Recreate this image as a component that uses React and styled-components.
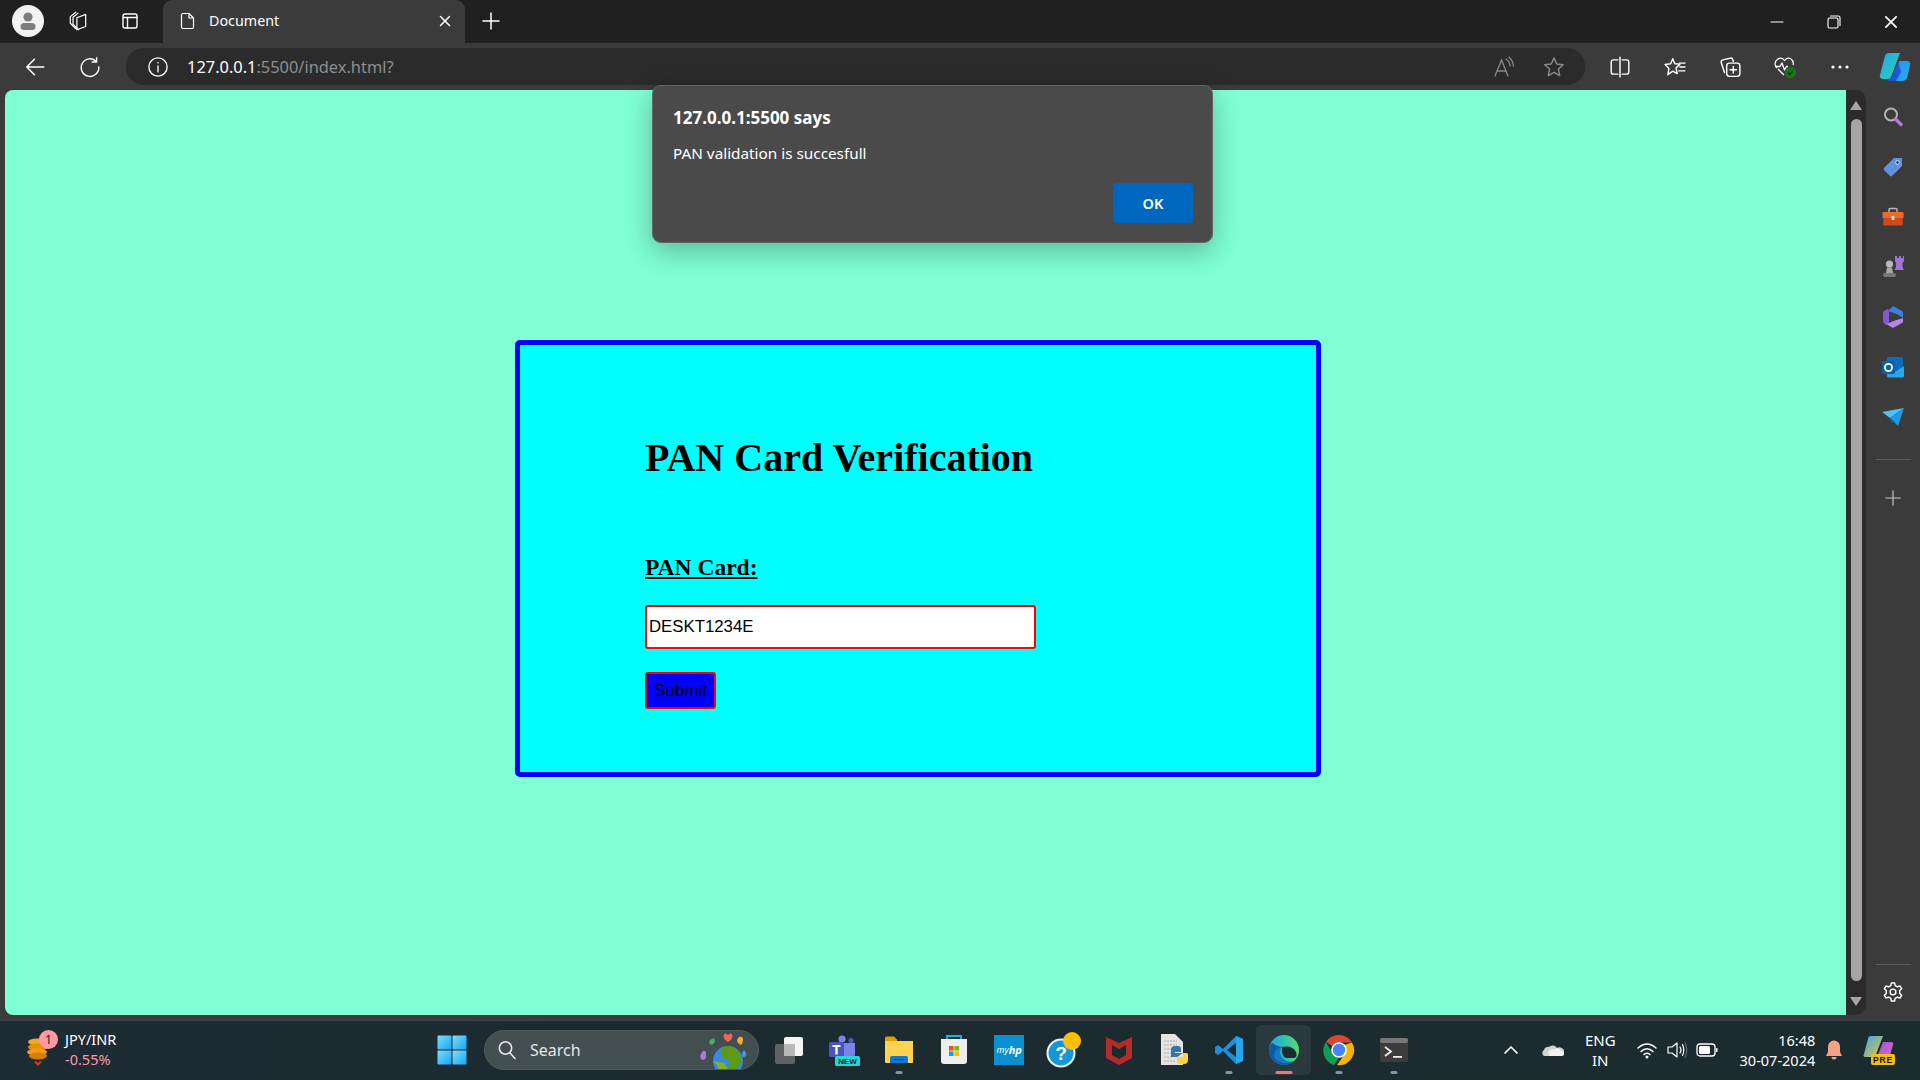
import React from "react"
import styled, { createGlobalStyle } from "styled-components"

const GlobalStyle = createGlobalStyle`
  html, body {
    margin: 0;
    height: 100%;
    overflow: hidden;
    background: #3b3b3b;
  }
  * {
    box-sizing: border-box;
  }
`

const Screen = styled.div`
  position: relative;
  width: 1920px;
  height: 1080px;
  display: flex;
  flex-direction: column;
  font-family: "Noto Sans", "Open Sans", sans-serif;
  color: #fff;
`

/* browser title bar */
const TitleBar = styled.div`
  height: 43px;
  flex: none;
  display: flex;
  align-items: center;
  background: #202020;
`

const TitleButton = styled.div`
  width: ${p => p.$w || 53}px;
  height: 41px;
  align-self: flex-start;
  flex: none;
  display: flex;
  align-items: center;
  justify-content: center;
`

const Avatar = styled.div`
  width: 32px;
  height: 32px;
  margin-left: 2px;
  border-radius: 50%;
  background: #f2f2f2;
  display: flex;
  align-items: center;
  justify-content: center;
`

const Tab = styled.div`
  width: 302px;
  height: 43px;
  margin-left: 7px;
  padding: 0 13px 2px 15px;
  flex: none;
  display: flex;
  align-items: center;
  gap: 11px;
  background: #3b3b3b;
  border-radius: 9px 9px 0 0;
  font-size: 14.3px;
`

const TabTitle = styled.span`
  flex: 1;
  margin-top: -1px;
`

const WindowControls = styled.div`
  margin-left: auto;
  display: flex;
  padding-right: 1px;
`

const WindowButton = styled.div`
  width: 57px;
  height: 41px;
  display: flex;
  align-items: center;
  justify-content: center;
`

/* address row */
const Toolbar = styled.div`
  height: 47px;
  flex: none;
  display: flex;
  align-items: center;
  background: #3b3b3b;
  padding-left: 7px;
`

const ToolButton = styled.div`
  width: ${p => p.$w || 55}px;
  height: 37px;
  flex: none;
  display: flex;
  align-items: center;
  justify-content: center;
`

const AddressBar = styled.div`
  width: 1459px;
  height: 37px;
  margin: 0 7px 0 9px;
  padding: 0 6px 0 21px;
  flex: none;
  display: flex;
  align-items: center;
  background: #2b2b2b;
  border-radius: 18px;
`

const Url = styled.div`
  margin-left: 18px;
  flex: 1;
  font-size: 16.4px;
  color: #8f8f8f;
  b {
    font-weight: 400;
    color: #fff;
  }
`

/* middle of the window */
const Body = styled.div`
  flex: 1;
  min-height: 0;
  display: flex;
  background: #3b3b3b;
  padding: 0 0 5px 5px;
`

const Page = styled.main`
  width: 1841px;
  flex: none;
  background: #7fffd4;
  border-radius: 8px 0 0 8px;
  padding: 250px 0 0 510px;
`

const Card = styled.section`
  width: 806px;
  height: 437px;
  padding: 90px 0 0 125px;
  background: #00ffff;
  border: 5px solid #0000ff;
  border-radius: 5px;
  color: #000;
  font-family: "Liberation Serif", "Times New Roman", serif;
`

const Heading = styled.h1`
  margin: 0 0 73px;
  font-size: 40px;
  line-height: 46px;
  font-weight: 700;
`

const FieldLabel = styled.label`
  display: block;
  font-size: 23.5px;
  line-height: 27px;
  font-weight: 700;
  text-decoration: underline;
  margin-bottom: 24px;
`

const TextInput = styled.input`
  display: block;
  width: 391px;
  height: 44px;
  padding: 0 2px;
  background: #fff;
  border: 2px solid #ff0000;
  border-radius: 3px;
  outline: none;
  font-family: "Liberation Sans", Arial, sans-serif;
  font-size: 16.8px;
  color: #000;
  margin-bottom: 23px;
`

const SubmitButton = styled.button`
  display: block;
  width: 71px;
  height: 37px;
  padding: 0;
  background: #0000ff;
  border: 2px solid #ff0000;
  border-radius: 3px;
  font-family: "Liberation Sans", Arial, sans-serif;
  font-size: 17px;
  color: #000;
`

const Scrollbar = styled.div`
  width: 20px;
  flex: none;
  display: flex;
  flex-direction: column;
  align-items: center;
  background: #2b2b2b;
  border-radius: 0 10px 10px 0;
  padding: 11px 0 9px;
`

const Arrow = styled.div`
  width: 0;
  height: 0;
  flex: none;
  border-left: 6px solid transparent;
  border-right: 6px solid transparent;
  ${p => p.$down ? "border-top: 9px solid #a5a5a5;" : "border-bottom: 9px solid #a5a5a5;"}
`

const Thumb = styled.div`
  width: 11px;
  flex: 1;
  margin: 9px 0 16px;
  background: #a5a5a5;
  border-radius: 6px;
`

const Sidebar = styled.aside`
  flex: 1;
  display: flex;
  flex-direction: column;
  align-items: center;
  padding: 2px 0 3px;
  margin-bottom: -5px;
`

const SideItem = styled.div`
  width: 100%;
  height: 50px;
  flex: none;
  display: flex;
  align-items: center;
  justify-content: center;
`

const SideRule = styled.div`
  width: 35px;
  height: 1px;
  flex: none;
  background: #5c5c5c;
  margin: ${p => p.$bottom ? "auto 0 2px" : "17px 0 13px"};
`

/* alert that lies over the page */
const Dialog = styled.div`
  position: absolute;
  left: 652px;
  top: 85px;
  width: 561px;
  height: 158px;
  padding: 21px 20px 0;
  background: #4a4a4a;
  border: 1px solid #646464;
  border-radius: 9px;
  box-shadow: 0 8px 28px rgba(0, 0, 0, 0.28);
`

const DialogTitle = styled.div`
  font-size: 17px;
  line-height: 22px;
  font-weight: 700;
`

const DialogText = styled.div`
  margin-top: 14px;
  font-size: 15.3px;
  line-height: 20px;
`

const OkButton = styled.div`
  position: absolute;
  right: 19px;
  bottom: 19px;
  width: 80px;
  height: 40px;
  padding-bottom: 1px;
  display: flex;
  align-items: center;
  justify-content: center;
  background: #0067c0;
  border-radius: 4px;
  font-size: 14.5px;
  font-weight: 600;
`

/* windows taskbar */
const Taskbar = styled.footer`
  height: 60px;
  flex: none;
  display: flex;
  align-items: center;
  padding-bottom: 2px;
  background: linear-gradient(90deg, #1d2b34, #1c2b2f 60%, #1b2c2f);
  border-top: 1px solid #3a4447;
`

const Widget = styled.div`
  width: 425px;
  height: 100%;
  flex: none;
  display: flex;
  align-items: center;
  padding-left: 26px;
  gap: 4px;
`

const WidgetText = styled.div`
  font-size: 14.5px;
  line-height: 20px;
  margin-top: -1px;
`

const WidgetDelta = styled.div`
  color: #ff9aa2;
`

const CoinIcon = styled.div`
  position: relative;
  width: 35px;
  height: 40px;
  flex: none;
`

const Badge = styled.span`
  position: absolute;
  left: 13px;
  top: 0;
  width: 19px;
  height: 19px;
  border-radius: 50%;
  background: #ff9aa2;
  color: #202020;
  font-size: 12px;
  line-height: 19px;
  text-align: center;
`

const StartButton = styled.div`
  width: 54px;
  display: flex;
  justify-content: center;
  flex: none;
`

const SearchBox = styled.div`
  width: 275px;
  height: 40px;
  margin: 0 3px 0 5px;
  padding: 0 0 0 12px;
  flex: none;
  display: flex;
  align-items: center;
  gap: 13px;
  background: #434e50;
  border: 1px solid #52595b;
  border-radius: 20px;
  font-size: 16px;
  color: #e6e6e6;
`

const SearchArt = styled.div`
  margin-left: auto;
  margin-right: 8px;
  height: 38px;
`

const AppSlot = styled.div`
  position: relative;
  width: 54.95px;
  height: 50px;
  flex: none;
  display: flex;
  align-items: center;
  justify-content: center;
  border-radius: 5px;
  background: ${p => p.$active ? "#2a393d" : "transparent"};
`

const RunDot = styled.span`
  position: absolute;
  bottom: 1px;
  left: 50%;
  transform: translateX(-50%);
  width: ${p => p.$active ? 17 : 7}px;
  height: 3px;
  border-radius: 2px;
  background: ${p => p.$active ? "#f07a68" : "#8c9496"};
`

const Tray = styled.div`
  flex: 1;
  height: 100%;
  display: flex;
  align-items: center;
`

const TraySlot = styled.div`
  width: ${p => p.$w}px;
  flex: none;
  display: flex;
  align-items: center;
  justify-content: center;
  margin-left: ${p => p.$ml || 0}px;
`

const LangText = styled.div`
  font-size: 15px;
  line-height: 20px;
  text-align: center;
`

const Clock = styled.div`
  width: 93px;
  flex: none;
  font-size: 14.5px;
  line-height: 20px;
  text-align: right;
`

/* icons */
const Line = ({ size = 20, children, sw = 1.4, color = "#fff", view = 20 }) => (
  <svg width={size} height={size} viewBox={`0 0 ${view} ${view}`} fill="none" stroke={color} strokeWidth={sw} strokeLinecap="round" strokeLinejoin="round">
    {children}
  </svg>
)

const Art = ({ size = 28, w, children, view = "0 0 28 28" }) => (
  <svg width={w || size} height={size} viewBox={view}>
    {children}
  </svg>
)

const AvatarGlyph = () => (
  <Art size={24} view="0 0 24 24">
    <circle cx="12" cy="8" r="4.6" fill="#7d7d7d" />
    <rect x="4.5" y="14" width="15" height="7" rx="3.5" fill="#7d7d7d" />
  </Art>
)

const Workspaces = () => (
  <Line size={22} sw={1.1}>
    <path d="M8 17 L3 12 V6 L8 2" />
    <path d="M10.5 18 L5.5 13 V6.5 L10 3" />
    <path d="M9 7 L17 4 V15 L9 18 Z" />
  </Line>
)

const VerticalTabs = () => (
  <Line size={20} sw={1.4}>
    <rect x="3" y="3" width="14" height="14" rx="2" />
    <path d="M3 6.5 H17 M7.5 6.5 V17" />
  </Line>
)

const PageIcon = () => (
  <Line size={20} sw={1.2}>
    <path d="M5 2.5 H11 L15.5 7 V16 a1.5 1.5 0 0 1 -1.5 1.5 H5 a1.5 1.5 0 0 1 -1.5 -1.5 V4 A1.5 1.5 0 0 1 5 2.5 Z" />
    <path d="M11 2.5 V7 H15.5" />
  </Line>
)

const CloseGlyph = ({ size = 14 }) => (
  <Line size={size} sw={1.5} view={14}>
    <path d="M2.5 2.5 L11.5 11.5 M11.5 2.5 L2.5 11.5" />
  </Line>
)

const PlusGlyph = ({ size = 20, color = "#fff", sw = 1.5 }) => (
  <Line size={size} sw={sw} color={color}>
    <path d="M10 2 V18 M2 10 H18" />
  </Line>
)

const BackIcon = () => (
  <Line size={22} sw={1.4}>
    <path d="M18 10 H2.5 M9.5 3 L2.5 10 L9.5 17" />
  </Line>
)

const ReloadIcon = () => (
  <Line size={22} sw={1.3}>
    <path d="M15.8 5 A8 8 0 1 0 18 10" />
    <path d="M16 1.5 V5.5 H12" />
  </Line>
)

const InfoIcon = () => (
  <Line size={22} sw={1.2}>
    <circle cx="10" cy="10" r="8.3" />
    <path d="M10 9 V14.5 M10 5.8 V6.3" />
  </Line>
)

const ReadAloud = () => (
  <svg width="24" height="24" viewBox="0 0 24 24" fill="none" stroke="#8a8a8a" strokeWidth="1.3" strokeLinecap="round">
    <path d="M3 21 L9.5 5 L16 21 M5 16 H14" />
    <path d="M14 4 Q18 7 18 11 M17 2 Q21 6 21.5 11" />
  </svg>
)

const StarIcon = ({ color = "#8a8a8a", size = 22 }) => (
  <Line size={size} sw={1.3} color={color}>
    <path d="M10 1.8 L12.5 7.2 L18.4 7.9 L14 11.9 L15.2 17.8 L10 14.9 L4.8 17.8 L6 11.9 L1.6 7.9 L7.5 7.2 Z" />
  </Line>
)

const SplitIcon = () => (
  <Line size={22} sw={1.3}>
    <path d="M8 3.5 H4 a2 2 0 0 0 -2 2 V14.5 a2 2 0 0 0 2 2 H8 M12 3.5 H16 a2 2 0 0 1 2 2 V14.5 a2 2 0 0 1 -2 2 H12 M10 1 V19" />
  </Line>
)

const FavoritesIcon = () => (
  <Line size={22} sw={1.3}>
    <path d="M8 2.5 L9.8 7 L14.5 7.4 L11 10.8 L12 16 L8 13.8 L3.5 17 L4.5 11.3 L1 7.8 L6 7 Z" />
    <path d="M14 6.5 H19 M14.5 10 H19 M13.5 13.5 H19" />
  </Line>
)

const CollectionsIcon = () => (
  <Line size={22} sw={1.3}>
    <path d="M5 15 L2 6 a2 2 0 0 1 1.5 -2.5 L10 2 a2 2 0 0 1 2.5 1.2 L13 5" />
    <rect x="7" y="6.5" width="12" height="12" rx="2.5" />
    <path d="M13 9.5 V15.5 M10 12.5 H16" />
  </Line>
)

const HealthIcon = () => (
  <svg width="24" height="24" viewBox="0 0 24 24" fill="none" stroke="#fff" strokeWidth="1.3" strokeLinejoin="round">
    <path d="M4 13 a5.5 5.5 0 0 1 1 -9 a5 5 0 0 1 6.5 1.5 a5 5 0 0 1 6.5 -1.5 a5.5 5.5 0 0 1 2 6" />
    <path d="M2 11.5 H7 L9 8 L11.5 15 L13.5 11.5 H15" />
    <path d="M5 14 L11 20" />
    <circle cx="17.5" cy="17.5" r="5.5" fill="#107c10" stroke="none" />
    <path d="M15 17.5 L17 19.5 L20 15.8" stroke="#0a2a0a" strokeWidth="1.4" />
  </svg>
)

const MoreIcon = () => (
  <Art size={22} view="0 0 22 22">
    <circle cx="4" cy="11" r="1.6" fill="#fff" />
    <circle cx="11" cy="11" r="1.6" fill="#fff" />
    <circle cx="18" cy="11" r="1.6" fill="#fff" />
  </Art>
)

const CopilotIcon = ({ size = 32 }) => (
  <Art size={size} view="0 0 32 32">
    <defs>
      <linearGradient id="cpA" x1="0" y1="0" x2="1" y2="1">
        <stop offset="0" stopColor="#2f9fee" />
        <stop offset="1" stopColor="#23d8a8" />
      </linearGradient>
      <linearGradient id="cpB" x1="0" y1="0" x2="1" y2="1">
        <stop offset="0" stopColor="#2f8bf0" />
        <stop offset="1" stopColor="#1ab4f5" />
      </linearGradient>
    </defs>
    <path d="M9 2 H21 L12 26 a3 3 0 0 1 -3 2 H4 a3 3 0 0 1 -3 -4 L6 5 a4 4 0 0 1 3 -3 Z" fill="url(#cpA)" />
    <path d="M16 30 H24 a5 5 0 0 0 4 -3 L31 14 a3 3 0 0 0 -3 -4 H20 Z" fill="url(#cpB)" />
    <path d="M13 25 L19 11 L22 21 L17 30 H9 Z" fill="#1b58d8" />
  </Art>
)

const MagnifierIcon = () => (
  <Art size={22} view="0 0 22 22">
    <circle cx="9" cy="8.5" r="6" fill="none" stroke="#b5b5b5" strokeWidth="2" />
    <path d="M13.5 13 L19 18.5" stroke="#b47cd8" strokeWidth="3.4" strokeLinecap="round" />
  </Art>
)

const TagIcon = () => (
  <Art size={22} view="0 0 22 22">
    <path d="M12 2 H20 V10 L10 20 a1.6 1.6 0 0 1 -2 0 L2 14 a1.6 1.6 0 0 1 0 -2 Z" fill="#5f93e0" />
    <circle cx="15.5" cy="6.5" r="1.8" fill="#28304a" stroke="#d8e4f8" strokeWidth="1" />
  </Art>
)

const ToolboxIcon = () => (
  <Art size={22} view="0 0 22 22">
    <path d="M7 6 V3.5 a1 1 0 0 1 1 -1 H14 a1 1 0 0 1 1 1 V6" fill="none" stroke="#b9b9b9" strokeWidth="1.4" />
    <rect x="0.5" y="6" width="21" height="6.5" rx="1.2" fill="#f0682a" />
    <rect x="1.2" y="12.5" width="19.6" height="7" rx="1.2" fill="#d4481a" />
    <rect x="9.5" y="10" width="3" height="4" rx="0.8" fill="#d8d8d8" />
  </Art>
)

const ChessIcon = () => (
  <Art size={24} view="0 0 24 24">
    <circle cx="8.5" cy="9" r="3.6" fill="#b8b8b8" />
    <path d="M6 12.5 H11 L12 18 H5 Z" fill="#a8a8a8" />
    <rect x="2" y="18" width="13" height="4" rx="2" fill="#777" />
    <path d="M14 1 H16 V3 H18 V1 H20 V3 H22 V1 H23 V6 L21.5 8 V12 L23 15 H13.5 L15 12 V8 L14 6 Z" fill="#a274d8" />
  </Art>
)

const Microsoft365Icon = () => (
  <Art size={24} view="0 0 24 24">
    <path d="M12 1 L21 6 A2 2 0 0 1 22 8 V13 L15.5 9 L7 6 Z" fill="#3d7fe0" />
    <path d="M2 8 A2 2 0 0 1 3 6 L7 4 L8 6 L8 17 L5 20 L3 18 A2 2 0 0 1 2 16 Z" fill="#7f5bd6" />
    <path d="M22 13 V16 A2 2 0 0 1 21 18 L12 23 L5 19 L14 15.5 Z" fill="#b586e8" />
    <path d="M8 9 L15.5 9 L16 14 L8 15 Z" fill="#3b3b3b" />
  </Art>
)

const OutlookIcon = () => (
  <Art size={24} view="0 0 24 24">
    <rect x="6" y="2" width="16" height="19" rx="1.5" fill="#0f6cbd" />
    <path d="M6 11 L14 17 L23 11 V21 a1.5 1.5 0 0 1 -1.5 1.5 H7.5 A1.5 1.5 0 0 1 6 21 Z" fill="#28a8ea" />
    <rect x="1" y="6" width="13" height="13" rx="1.5" fill="#0a5fb0" />
    <circle cx="7.5" cy="12.5" r="3.6" fill="none" stroke="#fff" strokeWidth="1.8" />
  </Art>
)

const SendIcon = () => (
  <Art size={22} view="0 0 22 22">
    <path d="M0 6 L22 2 L8 12 Z" fill="#4cc2f5" />
    <path d="M8 12 L22 2 L16 20 Z" fill="#1b9ae8" />
    <path d="M8 12 L9 17 L12 15 Z" fill="#0b63b5" />
  </Art>
)

const GearIcon = () => (
  <Line size={22} sw={1.3}>
    <circle cx="10" cy="10" r="2.6" />
    <path d="M8.5 1.8 H11.5 L12 4.2 L14 5.3 L16.3 4.5 L17.9 7.1 L16.1 8.7 V11.3 L17.9 12.9 L16.3 15.5 L14 14.7 L12 15.8 L11.5 18.2 H8.5 L8 15.8 L6 14.7 L3.7 15.5 L2.1 12.9 L3.9 11.3 V8.7 L2.1 7.1 L3.7 4.5 L6 5.3 L8 4.2 Z" />
  </Line>
)

const Coins = () => (
  <Art size={40} w={28} view="0 0 28 40">
    <ellipse cx="11" cy="12" rx="9" ry="3.4" fill="#f5a623" />
    <ellipse cx="12" cy="17" rx="10" ry="3.6" fill="#e88e0c" />
    <ellipse cx="11" cy="22" rx="10" ry="3.6" fill="#f59a12" />
    <ellipse cx="12" cy="26" rx="9" ry="3.4" fill="#d97c06" />
    <path d="M8 32 L12 36 L16 32 L14 31 L12 33 L10 31 Z" fill="#c8401c" />
  </Art>
)

const WindowsLogo = () => (
  <Art size={30} view="0 0 30 30">
    <defs>
      <linearGradient id="winA" x1="0" y1="0" x2="1" y2="1">
        <stop offset="0" stopColor="#7fdcfb" />
        <stop offset="1" stopColor="#16a6f2" />
      </linearGradient>
    </defs>
    <rect x="0.5" y="0.5" width="14" height="14" rx="1" fill="url(#winA)" />
    <rect x="15.5" y="0.5" width="14" height="14" rx="1" fill="url(#winA)" />
    <rect x="0.5" y="15.5" width="14" height="14" rx="1" fill="url(#winA)" />
    <rect x="15.5" y="15.5" width="14" height="14" rx="1" fill="url(#winA)" />
  </Art>
)

const SearchGlyph = () => (
  <Line size={20} sw={1.6} color="#e8e8e8">
    <circle cx="8.5" cy="8" r="6.2" />
    <path d="M13 13 L18 18.5" />
  </Line>
)

const EarthArt = () => (
  <Art size={38} w={54} view="0 0 50 38">
    <circle cx="30" cy="30" r="15" fill="#3c88dc" />
    <path d="M24 17 Q32 12 40 20 L44 30 L38 38 L30 38 L32 30 L24 26 Z" fill="#5d9a0f" />
    <path d="M15 30 Q20 34 20 38 H30 L26 32 Z" fill="#7fb620" />
    <path d="M30 4 Q27 1 25.5 4 Q25 8 30 11 Q35 8 34.5 4 Q33 1 30 4 Z" fill="#f0684e" />
    <path d="M12 9 l4 -2 1 4 -3 3 -3 -2 Z" fill="#3fb56a" />
    <path d="M41 6 q4 -1 4 3 q0 3 -2 5 q-4 -2 -4 -5 Z" fill="#f2b32c" />
    <path d="M5 20 q3 -1 3 3 q1 6 -4 6 q-3 -3 -1 -6 Z" fill="#a77bd8" />
    <path d="M46 19 q3 3 2 6 q-2 2 -4 0 q0 -4 2 -6 Z" fill="#3c9de0" />
  </Art>
)

const TaskView = () => (
  <Art size={30} view="0 0 30 30">
    <rect x="1" y="9" width="20" height="20" rx="2" fill="#5d6365" />
    <rect x="10" y="2" width="19" height="19" rx="2" fill="#f4f4f4" />
    <rect x="10" y="9" width="11" height="12" fill="#b8b8b8" />
  </Art>
)

const TeamsIcon = () => (
  <Art size={32} view="0 0 32 32">
    <circle cx="14" cy="5" r="3.6" fill="#7b83eb" />
    <circle cx="23" cy="6.5" r="2.6" fill="#5059c9" />
    <path d="M10 9 H27 V20 a5 5 0 0 1 -5 5 H15 a5 5 0 0 1 -5 -5 Z" fill="#7b83eb" />
    <rect x="1" y="8" width="15" height="15" rx="1.5" fill="#4b53bc" />
    <path d="M4.5 11 H12.5 V13 H9.7 V20.5 H7.3 V13 H4.5 Z" fill="#fff" />
    <rect x="7" y="22" width="25" height="10" rx="1.5" fill="#1fd9d9" />
    <text x="19.5" y="30" fontSize="8" fontWeight="700" fontFamily="Liberation Sans, sans-serif" textAnchor="middle" fill="#123">NEW</text>
  </Art>
)

const FolderIcon = () => (
  <Art size={30} view="0 0 30 30">
    <path d="M1 3 a1.5 1.5 0 0 1 1.5 -1.5 H10 L13 4.5 V10 H1 Z" fill="#dfa000" />
    <path d="M1 6 H29 V27 a1 1 0 0 1 -1 1 H2 a1 1 0 0 1 -1 -1 Z" fill="#ffd34f" />
    <path d="M6 28 V23 a2 2 0 0 1 2 -2 H22 a2 2 0 0 1 2 2 V28 Z" fill="#0f78d4" />
    <rect x="10" y="24" width="10" height="1.2" fill="#0a4d8c" />
  </Art>
)

const StoreIcon = () => (
  <Art size={32} view="0 0 32 32">
    <path d="M9 6 V2 H23 V6" fill="none" stroke="#19b5e8" strokeWidth="1.8" />
    <path d="M3 5 H29 V27 a3 3 0 0 1 -3 3 H6 a3 3 0 0 1 -3 -3 Z" fill="#eeeeee" />
    <rect x="11" y="12" width="4.6" height="4.6" fill="#f25022" />
    <rect x="16.4" y="12" width="4.6" height="4.6" fill="#7fba00" />
    <rect x="11" y="17.4" width="4.6" height="4.6" fill="#00a4ef" />
    <rect x="16.4" y="17.4" width="4.6" height="4.6" fill="#ffb900" />
  </Art>
)

const MyHpTile = styled.div`
  width: 30px;
  height: 30px;
  display: flex;
  align-items: center;
  justify-content: center;
  background: #0a8fd0;
  font-size: 9px;
  font-style: italic;
  color: #fff;
  b {
    font-size: 11px;
  }
`

const HelpIcon = () => (
  <Art size={36} w={36} view="0 0 36 36">
    <circle cx="15" cy="21" r="13.5" fill="#1597d6" stroke="#e8f6fc" strokeWidth="2" />
    <text x="15" y="28" fontSize="19" fontWeight="700" fontFamily="Liberation Sans, sans-serif" fill="#fff" textAnchor="middle">?</text>
    <circle cx="26" cy="9" r="9" fill="#fcc000" />
  </Art>
)

const McAfeeIcon = () => (
  <Art size={32} view="0 0 32 32">
    <path d="M3 3 L16 9 L29 3 V24 L16 31 L3 24 Z M9 11 V21 L16 25 L23 21 V11 L16 15 Z" fill="#b52a2a" fillRule="evenodd" />
  </Art>
)

const PythonFileIcon = () => (
  <Art size={34} view="0 0 34 34">
    <path d="M4 1 H18 L26 9 V32 H4 Z" fill="#e4e4e4" />
    <path d="M7 8 H20 M7 12 H20 M7 16 H17 M7 20 H15 M7 24 H15 M7 28 H18" stroke="#a8a8a8" strokeDasharray="2 1" />
    <path d="M14 17 a4 4 0 0 1 4 -4 H21 a3 3 0 0 1 3 3 V19 H18 V20 H26 L20 24 H14 Z" fill="#3874a8" />
    <path d="M20 24 H26 V20 H30 a2 2 0 0 1 1 2 V27 a4 4 0 0 1 -4 4 H23 a3 3 0 0 1 -3 -3 Z" fill="#fcd23f" />
  </Art>
)

const VsCodeIcon = () => (
  <Art size={30} view="0 0 30 30">
    <path d="M22 1 L29 4 V26 L22 29 L9 16 L4 20 L1 18 V12 L4 10 L9 14 Z M22 8 L13 15 L22 22 Z" fill="#1d8fdc" fillRule="evenodd" />
    <path d="M22 1 L29 4 V26 L22 29 Z" fill="#25a6ee" />
  </Art>
)

const EdgeIcon = () => (
  <Art size={32} view="0 0 32 32">
    <defs>
      <linearGradient id="edgeA" x1="0" y1="0.5" x2="1" y2="0.4">
        <stop offset="0" stopColor="#1fa3e0" />
        <stop offset="0.55" stopColor="#2cc4b4" />
        <stop offset="1" stopColor="#5adc62" />
      </linearGradient>
    </defs>
    <circle cx="16" cy="16" r="15" fill="url(#edgeA)" />
    <path d="M1 16 A15 15 0 0 0 26 27 Q16 30 11 23 Q8 17 14 13 Q8 12 4 9 Q1 12 1 16 Z" fill="#0c59a4" />
    <path d="M14 13 Q24 11 28 18 Q30 23 26 24 H18 Q13 22 14 13 Z" fill="#1c2b2f" />
    <path d="M12 18 Q13 26 22 28 Q14 31 8 26 Q5 22 7 17 Q9 14 14 13 Q12 15 12 18 Z" fill="#1478c8" />
  </Art>
)

const ChromeIcon = () => (
  <Art size={32} view="0 0 32 32">
    <path d="M16 1 A15 15 0 0 1 29 8.5 H16 A7.5 7.5 0 0 0 9 12 L3 8 A15 15 0 0 1 16 1 Z" fill="#db4437" />
    <path d="M3 8 L9.5 19.5 A7.5 7.5 0 0 0 16 23.5 L11 31 A15 15 0 0 1 3 8 Z" fill="#0f9d58" />
    <path d="M29 8.5 A15 15 0 0 1 14 31 L22 19.5 A7.5 7.5 0 0 0 21 11 Z" fill="#f4b400" />
    <circle cx="16" cy="16" r="7.8" fill="#fff" />
    <circle cx="16" cy="16" r="6.2" fill="#4285f4" />
  </Art>
)

const TerminalIcon = () => (
  <Art size={30} view="0 0 30 30">
    <rect x="1" y="3" width="28" height="24" rx="2" fill="#3c3c3c" />
    <rect x="1" y="3" width="28" height="5" rx="2" fill="#777" />
    <path d="M6 12 L12 16.5 L6 21" fill="none" stroke="#eee" strokeWidth="1.8" />
    <rect x="14" y="21" width="9" height="1.8" fill="#eee" />
  </Art>
)

const ChevronUp = () => (
  <Line size={16} sw={1.7} view={16}>
    <path d="M2 11 L8 5 L14 11" />
  </Line>
)

const CloudIcon = () => (
  <Art size={22} view="0 0 22 22">
    <path d="M2 17 a3.5 3.5 0 0 1 0 -6 a4 4 0 0 1 5 -3 a5 5 0 0 1 8 1 a4 4 0 0 1 5 8 Z" fill="#cfd3d4" />
    <path d="M8 17 a3 3 0 0 1 4 -6 a4 4 0 0 1 7 1 a2.5 2.5 0 0 1 1 5 Z" fill="#f2f2f2" />
  </Art>
)

const WifiIcon = () => (
  <Line size={22} sw={1.4} view={22}>
    <path d="M2 9 Q11 1 20 9 M5 12.5 Q11 7 17 12.5 M8 15.5 Q11 13 14 15.5" />
    <circle cx="11" cy="18" r="0.8" fill="#fff" />
  </Line>
)

const VolumeIcon = () => (
  <Line size={22} sw={1.2} view={22}>
    <path d="M2 8 H6 L11 4 V18 L6 14 H2 Z" />
    <path d="M14 8 Q16 11 14 14 M16.5 5.5 Q19 11 16.5 16.5" />
    <path d="M19 3.5 Q22.5 11 19 18.5" stroke="#666" />
  </Line>
)

const BatteryIcon = () => (
  <Art size={22} view="0 0 22 22">
    <rect x="1" y="5" width="18" height="12" rx="3" fill="none" stroke="#fff" strokeWidth="1.3" />
    <rect x="3" y="7" width="11" height="8" rx="1.5" fill="#fff" />
    <rect x="20" y="9" width="1.6" height="4" rx="0.8" fill="#fff" />
  </Art>
)

const BellIcon = () => (
  <Art size={22} view="0 0 22 22">
    <path d="M11 1.5 a6 6 0 0 1 6 6 V13 L19 17 H3 L5 13 V7.5 a6 6 0 0 1 6 -6 Z" fill="#f4a184" />
    <path d="M8.5 18 H13.5 a2.5 2.5 0 0 1 -5 0 Z" fill="#f4a184" />
  </Art>
)

const CopilotTray = () => (
  <Art size={30} w={32} view="0 0 32 30">
    <defs>
      <linearGradient id="cptA" x1="0" y1="0" x2="1" y2="1">
        <stop offset="0" stopColor="#36a9e8" />
        <stop offset="1" stopColor="#f0c23c" />
      </linearGradient>
      <linearGradient id="cptB" x1="0" y1="0" x2="1" y2="1">
        <stop offset="0" stopColor="#8a55e0" />
        <stop offset="1" stopColor="#f06cc0" />
      </linearGradient>
    </defs>
    <path d="M8 1 H20 L12 22 H2 a2 2 0 0 1 -1 -3 L5 4 a3 3 0 0 1 3 -3 Z" fill="url(#cptA)" />
    <path d="M14 22 L20 7 H28 a2 2 0 0 1 2 3 L27 20 L22 24 Z" fill="url(#cptB)" />
    <rect x="8" y="19" width="24" height="11" rx="2" fill="#f2c011" />
    <text x="20" y="28" fontSize="8.5" fontWeight="700" fontFamily="Liberation Sans, sans-serif" textAnchor="middle" letterSpacing="0.8" fill="#111">PRE</text>
  </Art>
)

const sideIcons = [MagnifierIcon, TagIcon, ToolboxIcon, ChessIcon, Microsoft365Icon, OutlookIcon, SendIcon]

const apps = [
  { key: "view", icon: <TaskView /> },
  { key: "teams", icon: <TeamsIcon /> },
  { key: "files", icon: <FolderIcon />, running: true },
  { key: "store", icon: <StoreIcon /> },
  { key: "hp", icon: <MyHpTile>my<b>hp</b></MyHpTile> },
  { key: "help", icon: <HelpIcon /> },
  { key: "mcafee", icon: <McAfeeIcon /> },
  { key: "python", icon: <PythonFileIcon /> },
  { key: "code", icon: <VsCodeIcon />, running: true },
  { key: "edge", icon: <EdgeIcon />, running: true, active: true },
  { key: "chrome", icon: <ChromeIcon />, running: true },
  { key: "term", icon: <TerminalIcon />, running: true },
]

const App = () => (
  <Screen>
    <GlobalStyle />
    <TitleBar>
      <TitleButton $w={53}>
        <Avatar><AvatarGlyph /></Avatar>
      </TitleButton>
      <TitleButton $w={50}><Workspaces /></TitleButton>
      <TitleButton $w={53}><VerticalTabs /></TitleButton>
      <Tab>
        <PageIcon />
        <TabTitle>Document</TabTitle>
        <CloseGlyph size={14} />
      </Tab>
      <TitleButton $w={52}><PlusGlyph /></TitleButton>
      <WindowControls>
        <WindowButton>
          <Line size={14} sw={1.1} view={14}><path d="M1 7 H13" /></Line>
        </WindowButton>
        <WindowButton>
          <Line size={14} sw={1.1} view={14}>
            <rect x="1" y="3" width="10" height="10" rx="1.5" />
            <path d="M3.5 1 H11.5 a1.5 1.5 0 0 1 1.5 1.5 V10.5" />
          </Line>
        </WindowButton>
        <WindowButton><CloseGlyph size={16} /></WindowButton>
      </WindowControls>
    </TitleBar>

    <Toolbar>
      <ToolButton><BackIcon /></ToolButton>
      <ToolButton><ReloadIcon /></ToolButton>
      <AddressBar>
        <InfoIcon />
        <Url><b>127.0.0.1</b>:5500/index.html?</Url>
        <ToolButton $w={50}><ReadAloud /></ToolButton>
        <ToolButton $w={50}><StarIcon /></ToolButton>
      </AddressBar>
      <ToolButton><SplitIcon /></ToolButton>
      <ToolButton><FavoritesIcon /></ToolButton>
      <ToolButton><CollectionsIcon /></ToolButton>
      <ToolButton><HealthIcon /></ToolButton>
      <ToolButton><MoreIcon /></ToolButton>
      <ToolButton><CopilotIcon /></ToolButton>
    </Toolbar>

    <Body>
      <Page>
        <Card>
          <Heading>PAN Card Verification</Heading>
          <FieldLabel htmlFor="pan">PAN Card:</FieldLabel>
          <TextInput id="pan" defaultValue="DESKT1234E" />
          <SubmitButton type="button">Submit</SubmitButton>
        </Card>
      </Page>
      <Scrollbar>
        <Arrow />
        <Thumb />
        <Arrow $down />
      </Scrollbar>
      <Sidebar>
        {sideIcons.map((Icon, i) => (
          <SideItem key={i}><Icon /></SideItem>
        ))}
        <SideRule />
        <SideItem><PlusGlyph size={18} color="#c8c8c8" sw={1.3} /></SideItem>
        <SideRule $bottom />
        <SideItem><GearIcon /></SideItem>
      </Sidebar>
    </Body>

    <Taskbar>
      <Widget>
        <CoinIcon>
          <Coins />
          <Badge>1</Badge>
        </CoinIcon>
        <WidgetText>
          <div>JPY/INR</div>
          <WidgetDelta>-0.55%</WidgetDelta>
        </WidgetText>
      </Widget>
      <StartButton><WindowsLogo /></StartButton>
      <SearchBox>
        <SearchGlyph />
        Search
        <SearchArt><EarthArt /></SearchArt>
      </SearchBox>
      {apps.map(app => (
        <AppSlot key={app.key} $active={app.active}>
          {app.icon}
          {app.running && <RunDot $active={app.active} />}
        </AppSlot>
      ))}
      <Tray>
        <TraySlot $w={30} $ml={75}><ChevronUp /></TraySlot>
        <TraySlot $w={30} $ml={12}><CloudIcon /></TraySlot>
        <TraySlot $w={50} $ml={7}>
          <LangText>ENG<br />IN</LangText>
        </TraySlot>
        <TraySlot $w={30} $ml={7}><WifiIcon /></TraySlot>
        <TraySlot $w={30}><VolumeIcon /></TraySlot>
        <TraySlot $w={30}><BatteryIcon /></TraySlot>
        <Clock>16:48<br />30-07-2024</Clock>
        <TraySlot $w={30} $ml={4}><BellIcon /></TraySlot>
        <TraySlot $w={40} $ml={10}><CopilotTray /></TraySlot>
      </Tray>
    </Taskbar>

    <Dialog>
      <DialogTitle>127.0.0.1:5500 says</DialogTitle>
      <DialogText>PAN validation is succesfull</DialogText>
      <OkButton>OK</OkButton>
    </Dialog>
  </Screen>
)

export default App
